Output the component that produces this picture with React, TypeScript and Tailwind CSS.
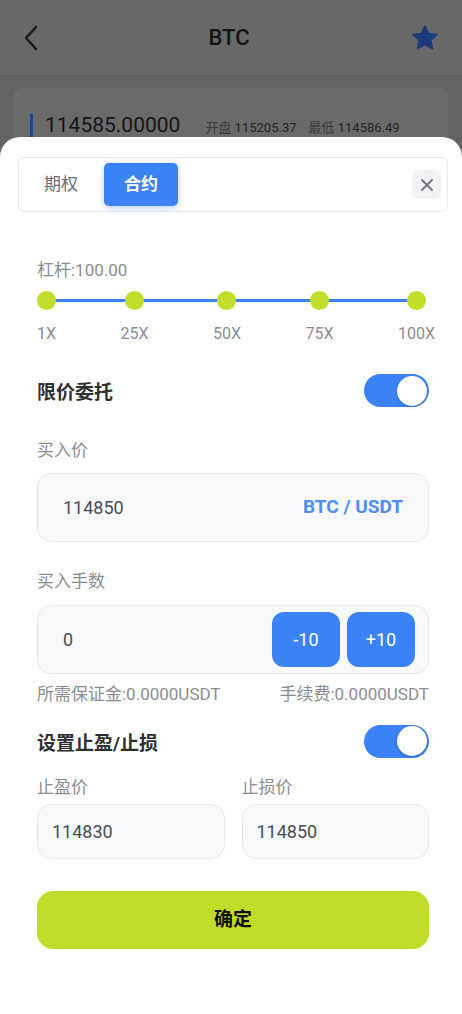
import React from "react";

const font = { fontFamily: 'Roboto, "Noto Sans CJK SC", sans-serif' };

const marks = ["1X", "25X", "50X", "75X", "100X"];

const Toggle = () => (
  <div className="flex h-[33px] w-[65px] items-center justify-end rounded-full bg-[#3b82f6] pr-[2px]">
    <div className="h-[30px] w-[30px] rounded-full bg-white shadow-[0_1px_3px_rgba(0,0,0,0.25)]" />
  </div>
);

const App = () => {
  return (
    <div className="relative h-[1014px] w-full overflow-hidden bg-[#636363]" style={font}>
      {/* page under the sheet, dimmed */}
      <div className="flex h-[76px] items-center justify-between border-b border-[#5c5c5c] bg-[#686868] px-[22px]">
        <svg width="18" height="26" viewBox="0 0 18 26" fill="none">
          <path d="M14 2 L4 13 L14 24" stroke="#1a1a1a" strokeWidth="2.6" strokeLinecap="round" strokeLinejoin="round" />
        </svg>
        <span className="pl-[8px] text-[22px] font-medium text-[#141414]">BTC</span>
        <svg width="30" height="30" viewBox="0 0 24 24">
          <path
            d="M12 2.2l2.9 6.2 6.8.8-5 4.6 1.3 6.7L12 17.2l-6 3.3 1.3-6.7-5-4.6 6.8-.8z"
            fill="#1c3b7c"
            stroke="#1c3b7c"
            strokeWidth="1.2"
            strokeLinejoin="round"
          />
        </svg>
      </div>
      <div className="mx-[14px] mt-3 h-[80px] rounded-lg bg-[#6a6a6a]">
        <div className="flex items-end gap-[25px] pl-4 pt-[26px]">
          <div className="flex items-center gap-[12px]">
            <div className="h-[23px] w-[3px] bg-[#21448c]" />
            <span className="text-[21px] leading-none text-[#151515]">114585.00000</span>
          </div>
          <div className="flex gap-[12px] text-[13px] text-[#242424]">
            <span>
              <span className="text-[#3a3a3a]">开盘</span> 115205.37
            </span>
            <span>
              <span className="text-[#3a3a3a]">最低</span> 114586.49
            </span>
          </div>
        </div>
      </div>

      {/* bottom sheet */}
      <div className="absolute inset-x-0 top-[137px] bottom-0 rounded-t-[20px] bg-white">
        <div className="ml-[18px] mr-[14px] mt-5 flex h-[55px] items-center justify-between rounded-md border border-[#e5e7eb] px-[5px]">
          <div className="flex gap-[6px]">
            <div className="flex h-[43px] w-[74px] items-center justify-center text-[17px] text-[#6b6e75]">期权</div>
            <div className="flex h-[43px] w-[74px] items-center justify-center rounded-[5px] bg-[#3b82f6] text-[17px] font-bold text-white shadow-[0_2px_6px_rgba(59,130,246,0.35)]">
              合约
            </div>
          </div>
          <button className="mr-[1px] flex h-[29px] w-[29px] items-center justify-center rounded-md bg-[#f1f2f4]">
            <svg width="14" height="14" viewBox="0 0 14 14">
              <path d="M2 2 L12 12 M12 2 L2 12" stroke="#6f7278" strokeWidth="1.8" strokeLinecap="round" />
            </svg>
          </button>
        </div>

        <div className="pl-[37px] pr-[33px]">
          <div className="mt-12 text-[17px] leading-5 text-[#8a8d93]">杠杆:100.00</div>

          <div className="relative mr-[-6px] mt-[11px] flex justify-between">
            <div className="absolute left-[9px] right-[9px] top-[8px] h-[3px] bg-[#3b82f6]" />
            {marks.map((m) => (
              <div key={m} className="relative flex flex-col items-center">
                <div className="h-[19px] w-[19px] rounded-full bg-[#c3dd2c]" />
                <span className="mt-[14px] text-[16px] leading-5 text-[#8a8d93]">{m}</span>
              </div>
            ))}
          </div>

          <div className="mt-[30px] flex items-center justify-between">
            <span className="pt-[5px] text-[19px] font-bold text-[#2f3033]">限价委托</span>
            <Toggle />
          </div>

          <div className="mt-[32px] text-[17px] leading-5 text-[#8a8d93]">买入价</div>
          <div className="mt-[13px] flex h-[69px] items-center justify-between rounded-[14px] border border-[#e6e7ea] bg-[#f7f8fa] pl-[25px] pr-[25px]">
            <span className="text-[18px] text-[#4a4d52]">114850</span>
            <span className="text-[19px] font-bold text-[#4f8ef7]">BTC / USDT</span>
          </div>

          <div className="mt-[29px] text-[17px] leading-5 text-[#8a8d93]">买入手数</div>
          <div className="mt-[14px] flex h-[69px] items-center justify-between rounded-[14px] border border-[#e6e7ea] bg-[#f7f8fa] pl-[25px] pr-[13px]">
            <span className="text-[18px] text-[#4a4d52]">0</span>
            <div className="flex gap-[7px]">
              <button className="flex h-[55px] w-[68px] items-center justify-center rounded-xl bg-[#3b82f6] text-[18px] text-white">-10</button>
              <button className="flex h-[55px] w-[68px] items-center justify-center rounded-xl bg-[#3b82f6] text-[18px] text-white">+10</button>
            </div>
          </div>

          <div className="mt-[10px] flex justify-between text-[17px] leading-5 text-[#8a8d93]">
            <span>所需保证金:0.0000USDT</span>
            <span>手续费:0.0000USDT</span>
          </div>

          <div className="mt-[21px] flex items-center justify-between">
            <span className="pt-[5px] text-[19px] font-bold text-[#2f3033]">设置止盈/止损</span>
            <Toggle />
          </div>

          <div className="mt-[19px] grid grid-cols-2 gap-x-[17px]">
            <div>
              <div className="text-[17px] leading-5 text-[#8a8d93]">止盈价</div>
              <div className="mt-[7px] flex h-[55px] items-center rounded-[14px] border border-[#e6e7ea] bg-[#f7f8fa] pl-[14px] text-[18px] text-[#4a4d52]">
                114830
              </div>
            </div>
            <div>
              <div className="text-[17px] leading-5 text-[#8a8d93]">止损价</div>
              <div className="mt-[7px] flex h-[55px] items-center rounded-[14px] border border-[#e6e7ea] bg-[#f7f8fa] pl-[14px] text-[18px] text-[#4a4d52]">
                114850
              </div>
            </div>
          </div>

          <button className="mt-[32px] flex h-[58px] w-full items-center justify-center rounded-2xl bg-[#c1dd2a] text-[19px] font-bold text-[#111]">
            确定
          </button>
        </div>
      </div>
    </div>
  );
};

export default App;
